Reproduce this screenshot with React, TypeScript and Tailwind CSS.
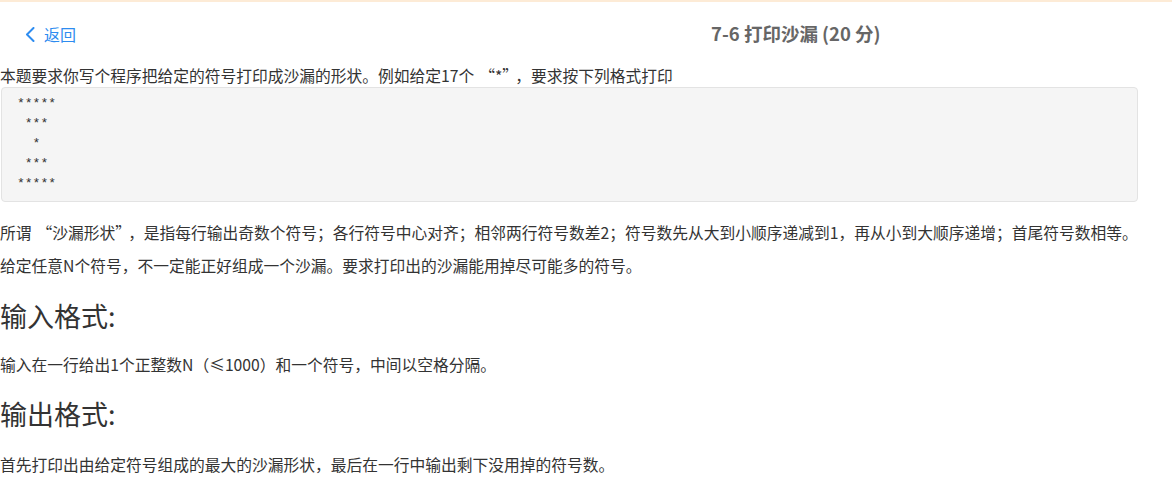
import React from 'react';

const sandglass = ['*****', ' ***', '  *', ' ***', '*****'];

// pad curly quotes out to the full-width look of the original page's font
const LQ = () => <span className="pl-[5px]">“</span>;
const RQ = () => <span className="pr-[5px]">”</span>;

const App = () => {
    return (
        <div
            className="w-[1172px] h-[486px] overflow-hidden bg-white border-t-2 border-[#fdebd6] text-[#333]"
            style={{ fontFamily: '"Noto Sans CJK SC", "Liberation Sans", sans-serif' }}
        >
            <div className="flex items-center h-[64px]">
                <a className="flex items-center ml-[25px] text-[#2d8cf0] text-[16px] cursor-pointer">
                    <svg width="10" height="15" viewBox="0 0 10 15" fill="none" className="mr-[9px]">
                        <polyline points="8.5,1 2,7.5 8.5,14" stroke="#2d8cf0" strokeWidth="2" strokeLinecap="round" strokeLinejoin="round" />
                    </svg>
                    <span>返回</span>
                </a>
                <h1 className="ml-[635px] text-[18.5px] font-bold text-[#666] -mt-[1px]">7-6 打印沙漏 (20 分)</h1>
            </div>

            <div className="w-[1138px] text-[15.75px]">
                <p className="leading-[20px]">本题要求你写个程序把给定的符号打印成沙漏的形状。例如给定17个<LQ />*<RQ />，要求按下列格式打印</p>
                <pre
                    className="mt-[1px] ml-[1px] pt-[6px] pb-[7px] px-[15px] bg-[#f5f5f5] border border-[#e3e3e3] rounded-[4px] text-[13px] leading-[20px] text-[#333]"
                    style={{ fontFamily: '"Liberation Mono", monospace' }}
                >
                    {sandglass.join('\n')}
                </pre>

                <p className="mt-[14px] leading-[33px] whitespace-nowrap">所谓<LQ />沙漏形状<RQ />，是指每行输出奇数个符号；各行符号中心对齐；相邻两行符号数差2；符号数先从大到小顺序递减到1，再从小到大顺序递增；首尾符号数相等。</p>
                <p className="leading-[33px]">给定任意N个符号，不一定能正好组成一个沙漏。要求打印出的沙漏能用掉尽可能多的符号。</p>

                <h2 className="mt-[14px] text-[27px] leading-[40px] font-normal">输入格式:</h2>
                <p className="mt-[12px] leading-[33px]">输入在一行给出1个正整数N（≤1000）和一个符号，中间以空格分隔。</p>

                <h2 className="mt-[13px] text-[27px] leading-[40px] font-normal">输出格式:</h2>
                <p className="mt-[14px] leading-[33px]">首先打印出由给定符号组成的最大的沙漏形状，最后在一行中输出剩下没用掉的符号数。</p>
            </div>
        </div>
    );
};

export default App;
